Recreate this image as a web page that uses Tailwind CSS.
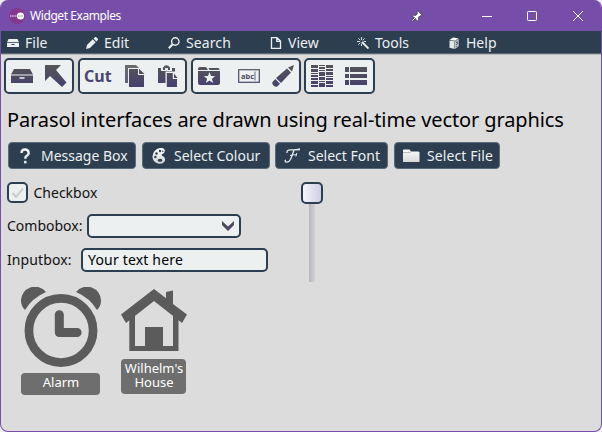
<!DOCTYPE html>
<html lang="en">
<head>
<meta charset="utf-8">
<title>Widget Examples</title>
<script src="https://cdn.jsdelivr.net/npm/@tailwindcss/browser@4"></script>
</head>
<body class="bg-[#eeeeee] w-[602px] h-[432px] overflow-hidden font-['Noto_Sans',sans-serif] text-[14px] leading-[20px] text-[#111]">
<svg class="absolute w-0 h-0">
  <defs>
    <linearGradient id="ink" gradientUnits="userSpaceOnUse" x1="0" y1="0" x2="0" y2="22"><stop offset="0" stop-color="#555"/><stop offset="1" stop-color="#474070"/></linearGradient>
    <linearGradient id="pale" gradientUnits="userSpaceOnUse" x1="0" y1="0" x2="0" y2="16"><stop offset="0" stop-color="#fff"/><stop offset="1" stop-color="#d2d4d4"/></linearGradient>
  </defs>
</svg>
<div class="w-[602px] h-[432px] rounded-[8px] overflow-hidden bg-[#dcdcdc] border border-[#764da8] border-t-0 flex flex-col">
  <header class="h-[31px] shrink-0 bg-[#764da8] flex items-center text-white">
    <svg class="ml-2 w-4 h-4 shrink-0" viewBox="0 0 16 16"><circle cx="8" cy="8" r="8" fill="#86388f"/><path d="M1 8h8" stroke="#d9b5dc" stroke-width="1.6" stroke-dasharray="1.2 .5"/><circle cx="11.5" cy="8" r="3.6" fill="#fff"/><path d="M9 8h5" stroke="#b58cbd" stroke-width="1"/></svg>
    <h1 class="ml-[5px] w-[360px] text-[12px] leading-4 tracking-[-0.42px] whitespace-nowrap">Widget Examples</h1>
    <svg class="ml-[21px] w-[12px] h-[12px] shrink-0" viewBox="0 0 12 12"><path d="M6.500.8l4.700 4.300-1.200 1-1-.3-1.700 1.700.3 2.400-1.200 1L1.600 6.100l1-1 2.300.3L6.500 3.500l-.6-1.400z" fill="#fff" stroke="#4a4850" stroke-width=".9"/><path d="M4 8L1 11" stroke="#4a4850" stroke-width="2"/><path d="M4 8L1.300 10.700" stroke="#fff" stroke-width="1"/></svg>
    <svg class="ml-[58px] w-[12px] h-[12px] shrink-0" viewBox="0 0 12 12"><path d="M1 6.500h10" stroke="#fff"/></svg>
    <svg class="ml-[33px] w-[12px] h-[12px] shrink-0" viewBox="0 0 12 12"><rect x="1.500" y="1.500" width="9" height="9" rx=".8" fill="none" stroke="#fff"/></svg>
    <svg class="ml-[34px] w-[12px] h-[12px] shrink-0" viewBox="0 0 12 12"><path d="M1 1l10 10M11 1L1 11" stroke="#fff"/></svg>
  </header>
  <nav class="h-[23px] shrink-0 bg-[#2c3e50] border-b border-[#596775] flex items-center text-[#ecf0f1] pl-[6px] pt-[2px] shadow-[0_1px_0_#b5b8bb]">
    <div class="w-[79px] flex items-center gap-[6px]"><svg class="w-3 h-3" viewBox="0 0 12 12"><path d="M1.500 2h9L12 5.200H0zM0 6h12v4H0z" fill="#ecf0f1"/><path d="M4.500 7.500h3" stroke="#2c3e50"/></svg><span>File</span></div>
    <div class="w-[82px] flex items-center gap-[6px]"><svg class="w-3 h-3" viewBox="0 0 12 12"><path d="M0 12l1-4 5.700-5.700 3 3L4 11zM7.500 1.500L9 .2q.7-.5 1.300 0l1.500 1.500q.5.6 0 1.200L10.500 4.500z" fill="#ecf0f1"/></svg><span>Edit</span></div>
    <div class="w-[102px] flex items-center gap-[6px]"><svg class="w-3 h-3" viewBox="0 0 12 12"><circle cx="7.300" cy="4.500" r="3.700" fill="none" stroke="#ecf0f1" stroke-width="1.400"/><path d="M4.600 7.300L.8 11.200" stroke="#ecf0f1" stroke-width="2"/></svg><span class="tracking-[0.1px]">Search</span></div>
    <div class="w-[87px] flex items-center gap-[6px]"><svg class="w-3 h-3" viewBox="0 0 12 12"><path d="M1.500.7H7L10.500 4v7.300h-9zM6.800.7V4.300h3.700" fill="none" stroke="#ecf0f1" stroke-width="1.300"/></svg><span>View</span></div>
    <div class="w-[91px] flex items-center gap-[6px]"><svg class="w-3 h-3" viewBox="0 0 12 12"><path d="M5 5l6.500 6.500" stroke="#ecf0f1" stroke-width="1.900"/><path d="M4.500 0v3M4.500 6.500V9M0 4.500h3M6.500 4.500H9M1.300 1.300l2 2M7.700 1.300l-2 2M1.300 7.700l2-2" stroke="#ecf0f1" stroke-width=".9"/></svg><span>Tools</span></div>
    <div class="flex items-center gap-[6px]"><svg class="w-3 h-3" viewBox="0 0 12 12"><path d="M1.500 3L5 .5l5.500.8-3.300 2.500z" fill="#fff"/><path d="M1.500 3.500l5 .7V12l-5-1.200z" fill="#e5e8e9"/><path d="M7 4.200L10.700 1.800v7.400L7 12z" fill="#bfc4c8"/><path d="M8 5.800q1.600-2 1.600-.2 0 .8-.9 1.500v.9M8.700 8.800v.8" stroke="#2c3e50" stroke-width=".8" fill="none"/></svg><span>Help</span></div>
  </nav>

  <div class="mt-1 ml-[3px] flex h-9 shrink-0">
    <div class="w-[70px] border-2 border-[#2c3e50] rounded-[5px] bg-[#ecf0f1] flex items-center pl-[5px] gap-3">
      <svg class="w-[22px] h-[22px]" viewBox="0 0 22 22" fill="url(#ink)"><path d="M3 4h16l3 5.500H0zM0 10.500h22V18H0z"/><path d="M8.500 13h5" stroke="#ecf0f1" stroke-width="1.300"/></svg>
      <svg class="w-[22px] h-[22px]" viewBox="0 0 22 22" fill="url(#ink)"><path d="M0 0h16l-5 5 10.500 12.500L17 22 5 11 0 16z"/></svg>
    </div>
    <div class="ml-1 w-[109px] border-2 border-[#2c3e50] rounded-[5px] bg-[#ecf0f1] flex items-center pl-[4px]">
      <span class="w-[40px] font-bold text-[16px] text-[#4a4570]">Cut</span>
      <svg class="w-[22px] h-[22px]" viewBox="0 0 22 22" fill="url(#ink)"><path d="M1 0h11l3 3H4v15H1z" fill-opacity=".85"/><path d="M5 4h9v6h6v12H5zM15 3.800L20.500 9H15z"/></svg>
      <svg class="ml-3 w-[22px] h-[22px]" viewBox="0 0 22 22" fill="url(#ink)"><path d="M0 3h3v3h11V3h3v3.500H7.500V18H0zM5 5V2.500Q8.500-2 12 2.500V5h-2V3H7v2zM8.800 8h6v6H19v8H8.800zM16 8.500L19.500 13H16z"/></svg>
    </div>
    <div class="ml-1 w-[110px] border-2 border-[#2c3e50] rounded-[5px] bg-[#ecf0f1] flex items-center pl-[5px]">
      <svg class="w-[22px] h-[22px]" viewBox="0 0 22 22" fill="url(#ink)"><path d="M0 4q0-2 2-2h6l2 3H0zM10.500 3H20q1.500 0 1.500 2h-10zM0 6h22v12q0 2-2 2H2q-2 0-2-2z"/><path d="M11.500 7l1.500 4 4.200.2-3.300 2.600 1.200 4.100-3.600-2.400-3.600 2.400 1.200-4.100-3.300-2.600L10 11z" fill="#ecf0f1"/></svg>
      <svg class="ml-[18px] w-[22px] h-[22px]" viewBox="0 0 22 22"><rect x=".7" y="4.700" width="20.600" height="12.600" fill="none" stroke="url(#ink)" stroke-width="1.200"/><text x="3" y="13.800" font-family="Noto Sans, sans-serif" font-size="7.500" font-weight="700" fill="#4e4b60">abc</text><path d="M17 6.500v9" stroke="#4e4b60" stroke-width=".8"/></svg>
      <svg class="ml-3 w-[22px] h-[22px]" viewBox="0 0 22 22" fill="url(#ink)"><path d="M22 0l-2 6.500-4-4zM15 3.500l4 4L9 18l-5-5zM3.300 14L8 18.700l-2.500 2.500Q4 22.500 2 21L.9 19.800Q-.5 18 1 16.400z"/></svg>
    </div>
    <div class="ml-[3px] w-[71px] border-2 border-[#2c3e50] rounded-[5px] bg-[#ecf0f1] flex items-center pl-[5px] gap-3">
      <svg class="w-[22px] h-[22px]" viewBox="0 0 22 22" fill="url(#ink)"><path d="M0 0h7v3H0zM0 4h7v3H0zM0 8h7v1H0zM0 10h7v2H0zM0 13h7v2H0zM0 16h7v3H0zM0 20h7v2H0zM8 0h6v1H8zM8 2h6v2H8zM8 5h6v1H8zM8 7h6v4H8zM8 12h6v3H8zM8 16h6v1H8zM8 18h6v4H8zM15 0h7v3h-7zM15 4h7v2h-7zM15 7h7v3h-7zM15 11h7v1h-7zM15 13h7v2h-7zM15 16h7v3h-7zM15 20h7v2h-7z"/></svg>
      <svg class="w-[22px] h-[22px]" viewBox="0 0 22 22" fill="url(#ink)"><path d="M0 2h4v5H0zM5 2h17v5H5zM0 9h4v4H0zM5 9h17v4H5zM0 15h4v5H0zM5 15h17v5H5z"/></svg>
    </div>
  </div>

  <h2 class="mt-[12px] ml-[6px] h-[28px] shrink-0 text-[20px] leading-[28px] tracking-[-0.11px] whitespace-nowrap text-black">Parasol interfaces are drawn using real-time vector graphics</h2>

  <div class="mt-[8px] ml-[7px] flex gap-[5px] h-[27px] shrink-0 text-[#ecf0f1] whitespace-nowrap">
    <button class="w-[128px] border border-[#5b6b7a] rounded-[4px] bg-[#2c3e50] flex items-center pl-[8px] gap-[8px]"><svg class="w-4 h-4 shrink-0" viewBox="0 0 16 16"><path d="M4.500 5Q4.500 1.500 8 1.500T11.700 5Q11.700 6.800 9.800 7.800 8.300 8.700 8.300 10.700" fill="none" stroke="#f4f5f6" stroke-width="2.400"/><rect x="6.900" y="12.800" width="2.800" height="2.800" rx="1" fill="#dfe2e3"/></svg>Message Box</button>
    <button class="ml-[0.5px] w-[128px] border border-[#5b6b7a] rounded-[4px] bg-[#2c3e50] flex items-center pl-[8px] gap-[7.500px]"><svg class="w-4 h-4 shrink-0" viewBox="0 0 16 16"><path d="M9 0Q13-.5 14 2.500 14 5 11 6.200 10 7.500 12.500 8.500 15 10.500 13.500 13.500 11.500 16.500 7 15.500 1.500 14 1.500 8.500 2 1.500 9 0z" fill="url(#pale)"/><g fill="#2c3e50"><circle cx="9" cy="3" r="1.200"/><circle cx="5.500" cy="5.500" r="1.200"/><circle cx="4.400" cy="9" r="1.200"/><ellipse cx="9" cy="12.300" rx="2.400" ry="1.500"/><circle cx="11.800" cy="3.300" r=".8"/></g></svg>Select Colour</button>
    <button class="ml-[0.5px] w-[113px] border border-[#5b6b7a] rounded-[4px] bg-[#2c3e50] flex items-center pl-[8px] gap-[8px]"><svg class="w-4 h-4 shrink-0" viewBox="0 0 16 16" fill="none" stroke="#e6e9ea"><path d="M3 5Q2.500 1.500 7 1.800q4 .5 9-.8M10 2Q8.500 7 6.500 11.500 4.500 15 1.500 13.800.5 12.500 2 12" stroke-width="1.300"/><path d="M6 7.500q3-1 6.500-.7M12.800 5q-.3 2-1 3.500M15.500 1l-.7 1.800" stroke-width="1"/></svg>Select Font</button>
    <button class="ml-px w-[106px] border border-[#5b6b7a] rounded-[4px] bg-[#2c3e50] flex items-center pl-[8px] gap-[7px]"><svg class="w-[17px] h-4 shrink-0" viewBox="0 0 17 16"><path d="M0 2.500q0-1 1-1h5.500l1.500 2H15q1.500 0 1.500 1V14H0z" fill="url(#pale)"/><path d="M0 4.500h7l1.500-1" stroke="#9da5ab" stroke-width=".7" fill="none"/></svg><span class="tracking-[0.1px]">Select File</span></button>
  </div>

  <main class="flex mt-[13px] ml-[6px] shrink-0 h-[100px]">
    <div class="w-[294px] shrink-0">
      <label class="flex items-center h-[21px]"><span class="w-[21px] h-[21px] border-2 border-[#2c3e50] rounded-[5px] bg-[#ecf0f1] mr-[5.500px]"><svg class="w-[17px] h-[17px]" viewBox="0 0 17 17"><path d="M3.500 9l3.500 4 7-8.500" fill="none" stroke="#c9cbd1" stroke-width="1.900"/></svg></span>Checkbox</label>
      <div class="flex items-center h-6 mt-[11px]"><span class="w-[80px]">Combobox:</span><div class="w-[154px] h-6 border-2 border-[#2c3e50] rounded-[5px] bg-[#ecf0f1] flex items-center justify-end pr-[5px]"><svg class="w-[12px] h-[10px]" viewBox="0 0 12 10"><path d="M0 0l6 5.500L12 0v4L6 10 0 4z" fill="#4e4b60"/></svg></div></div>
      <div class="flex items-center h-6 mt-[10px]"><span class="w-[74px] tracking-[0.1px]">Inputbox:</span><div class="w-[187px] h-6 border-2 border-[#2c3e50] rounded-[5px] bg-[#ecf0f1] flex items-center pl-[5px] text-black tracking-[0.18px]">Your text here</div></div>
    </div>
    <div class="w-[22px] flex flex-col items-center">
      <div class="w-[22px] h-[22px] shrink-0 border-2 border-[#2c3e50] rounded-[5px] bg-linear-to-r from-[#f5f5fc] to-[#cfcfe2]"></div>
      <div class="w-[6px] h-[78px] bg-linear-to-r from-[#b8b8bc] to-[#d0d0d5]"></div>
    </div>
  </main>

  <div class="ml-5 mt-[5px] flex items-start gap-5 shrink-0 text-[13px] leading-[14px] text-white text-center">
    <div class="w-[80px]">
      <svg class="w-[80px] h-[80px] block" viewBox="0 0 80 80"><path d="M0 14A14 14 0 0 1 25 5Q11 11 4 23Q0 19 0 14zM80 14A14 14 0 0 0 55 5Q69 11 76 23Q80 19 80 14z" fill="#5b5b5b"/><circle cx="40" cy="43.500" r="32.100" fill="none" stroke="#5b5b5b" stroke-width="8.700"/><path d="M38.300 27.800v17.700h17.800" fill="none" stroke="#5b5b5b" stroke-width="9" stroke-linecap="round" stroke-linejoin="round"/></svg>
      <div class="mt-[6px] w-[79px] h-[22px] rounded-[4px] bg-[#6e6e6e] pt-[2px] pl-px">Alarm</div>
    </div>
    <div class="w-[66px]">
      <svg class="w-[66px] h-[66px] block" viewBox="0 0 66 66" fill="#5b5b5b"><path d="M0 27.500L33 2 45 11.300V5L52 3.500V17L66 27.500 61 36 33 14 5 36z"/><path d="M8.300 27L14 23V59H24V40h18V59H52V23l5.500 4V64H8.300z"/></svg>
      <div class="mt-[6px] w-[65px] h-[35px] rounded-[4px] bg-[#6e6e6e] pt-[2px] pl-px">Wilhelm's House</div>
    </div>
  </div>
</div>
</body>
</html>
